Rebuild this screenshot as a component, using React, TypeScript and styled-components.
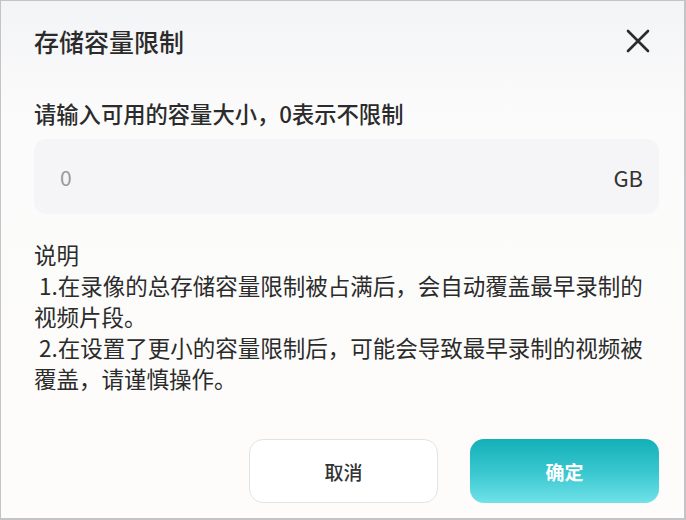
import React from 'react';
import styled, { createGlobalStyle } from 'styled-components';

const GlobalStyle = createGlobalStyle`
  html, body {
    margin: 0;
    padding: 0;
    background: #ffffff;
  }
  * {
    box-sizing: border-box;
  }
`;

const Dialog = styled.div`
  width: 686px;
  height: 520px;
  border: 1px solid #c4c4c6;
  border-right-width: 2px;
  border-bottom-width: 2px;
  background: linear-gradient(180deg, #f3f4f6 0%, #fbfbfb 22%, #fdfcfa 100%);
  font-family: "Noto Sans CJK SC", "Noto Sans", sans-serif;
  color: #2b2b2b;
  padding: 0 25px 0 33px;
  display: flex;
  flex-direction: column;
`;

const Header = styled.div`
  height: 80px;
  display: flex;
  align-items: center;
  justify-content: space-between;
`;

const Title = styled.h1`
  margin: 0;
  font-size: 25px;
  line-height: 34px;
  font-weight: 500;
  color: #2b2b2b;
`;

const CloseButton = styled.button`
  border: none;
  background: transparent;
  padding: 0;
  width: 30px;
  height: 30px;
  display: flex;
  align-items: center;
  justify-content: center;
  cursor: pointer;
  margin-right: 6px;
`;

const FieldLabel = styled.div`
  font-size: 22.3px;
  font-weight: 500;
  color: #2b2b2b;
  line-height: 30px;
  margin-top: 17px;
`;

const InputBox = styled.div`
  margin-top: 11px;
  height: 75px;
  width: 625px;
  border-radius: 12px;
  background: #f5f4f6;
  display: flex;
  align-items: center;
  justify-content: space-between;
  padding: 0 16px 0 26px;
`;

const Value = styled.span`
  font-size: 21px;
  color: #9a9a9a;
`;

const Unit = styled.span`
  font-size: 22px;
  color: #333333;
`;

const Notes = styled.div`
  margin-top: 25px;
  font-size: 22.5px;
  line-height: 31px;
  color: #2b2b2b;
  width: 625px;
`;

const NoteLine = styled.div`
  white-space: pre;
`;

const Footer = styled.div`
  margin-top: auto;
  margin-bottom: 15px;
  display: flex;
  justify-content: flex-end;
  gap: 32px;
`;

const Button = styled.button<{ $primary?: boolean }>`
  width: 189px;
  height: 64px;
  border-radius: 14px;
  font-family: inherit;
  font-size: 19px;
  cursor: pointer;
  ${p =>
    p.$primary
      ? `
    border: none;
    color: #ffffff;
    font-weight: 700;
    background: linear-gradient(180deg, #13afb8 0%, #3cc9d1 55%, #70e2e8 100%);
  `
      : `
    border: 1px solid #e3e3e3;
    background: #ffffff;
    color: #333333;
    font-weight: 500;
  `}
`;

export default function App() {
  return (
    <>
      <GlobalStyle />
      <Dialog>
        <Header>
          <Title>存储容量限制</Title>
          <CloseButton aria-label="close">
            <svg width="26" height="26" viewBox="0 0 26 26">
              <path d="M3 3 L23 23 M23 3 L3 23" stroke="#2b2b2b" strokeWidth="2.6" strokeLinecap="round" />
            </svg>
          </CloseButton>
        </Header>
        <FieldLabel>请输入可用的容量大小，0表示不限制</FieldLabel>
        <InputBox>
          <Value>0</Value>
          <Unit>GB</Unit>
        </InputBox>
        <Notes>
          <NoteLine>说明</NoteLine>
          <NoteLine> 1.在录像的总存储容量限制被占满后，会自动覆盖最早录制的</NoteLine>
          <NoteLine>视频片段。</NoteLine>
          <NoteLine> 2.在设置了更小的容量限制后，可能会导致最早录制的视频被</NoteLine>
          <NoteLine>覆盖，请谨慎操作。</NoteLine>
        </Notes>
        <Footer>
          <Button>取消</Button>
          <Button $primary>确定</Button>
        </Footer>
      </Dialog>
    </>
  );
}
